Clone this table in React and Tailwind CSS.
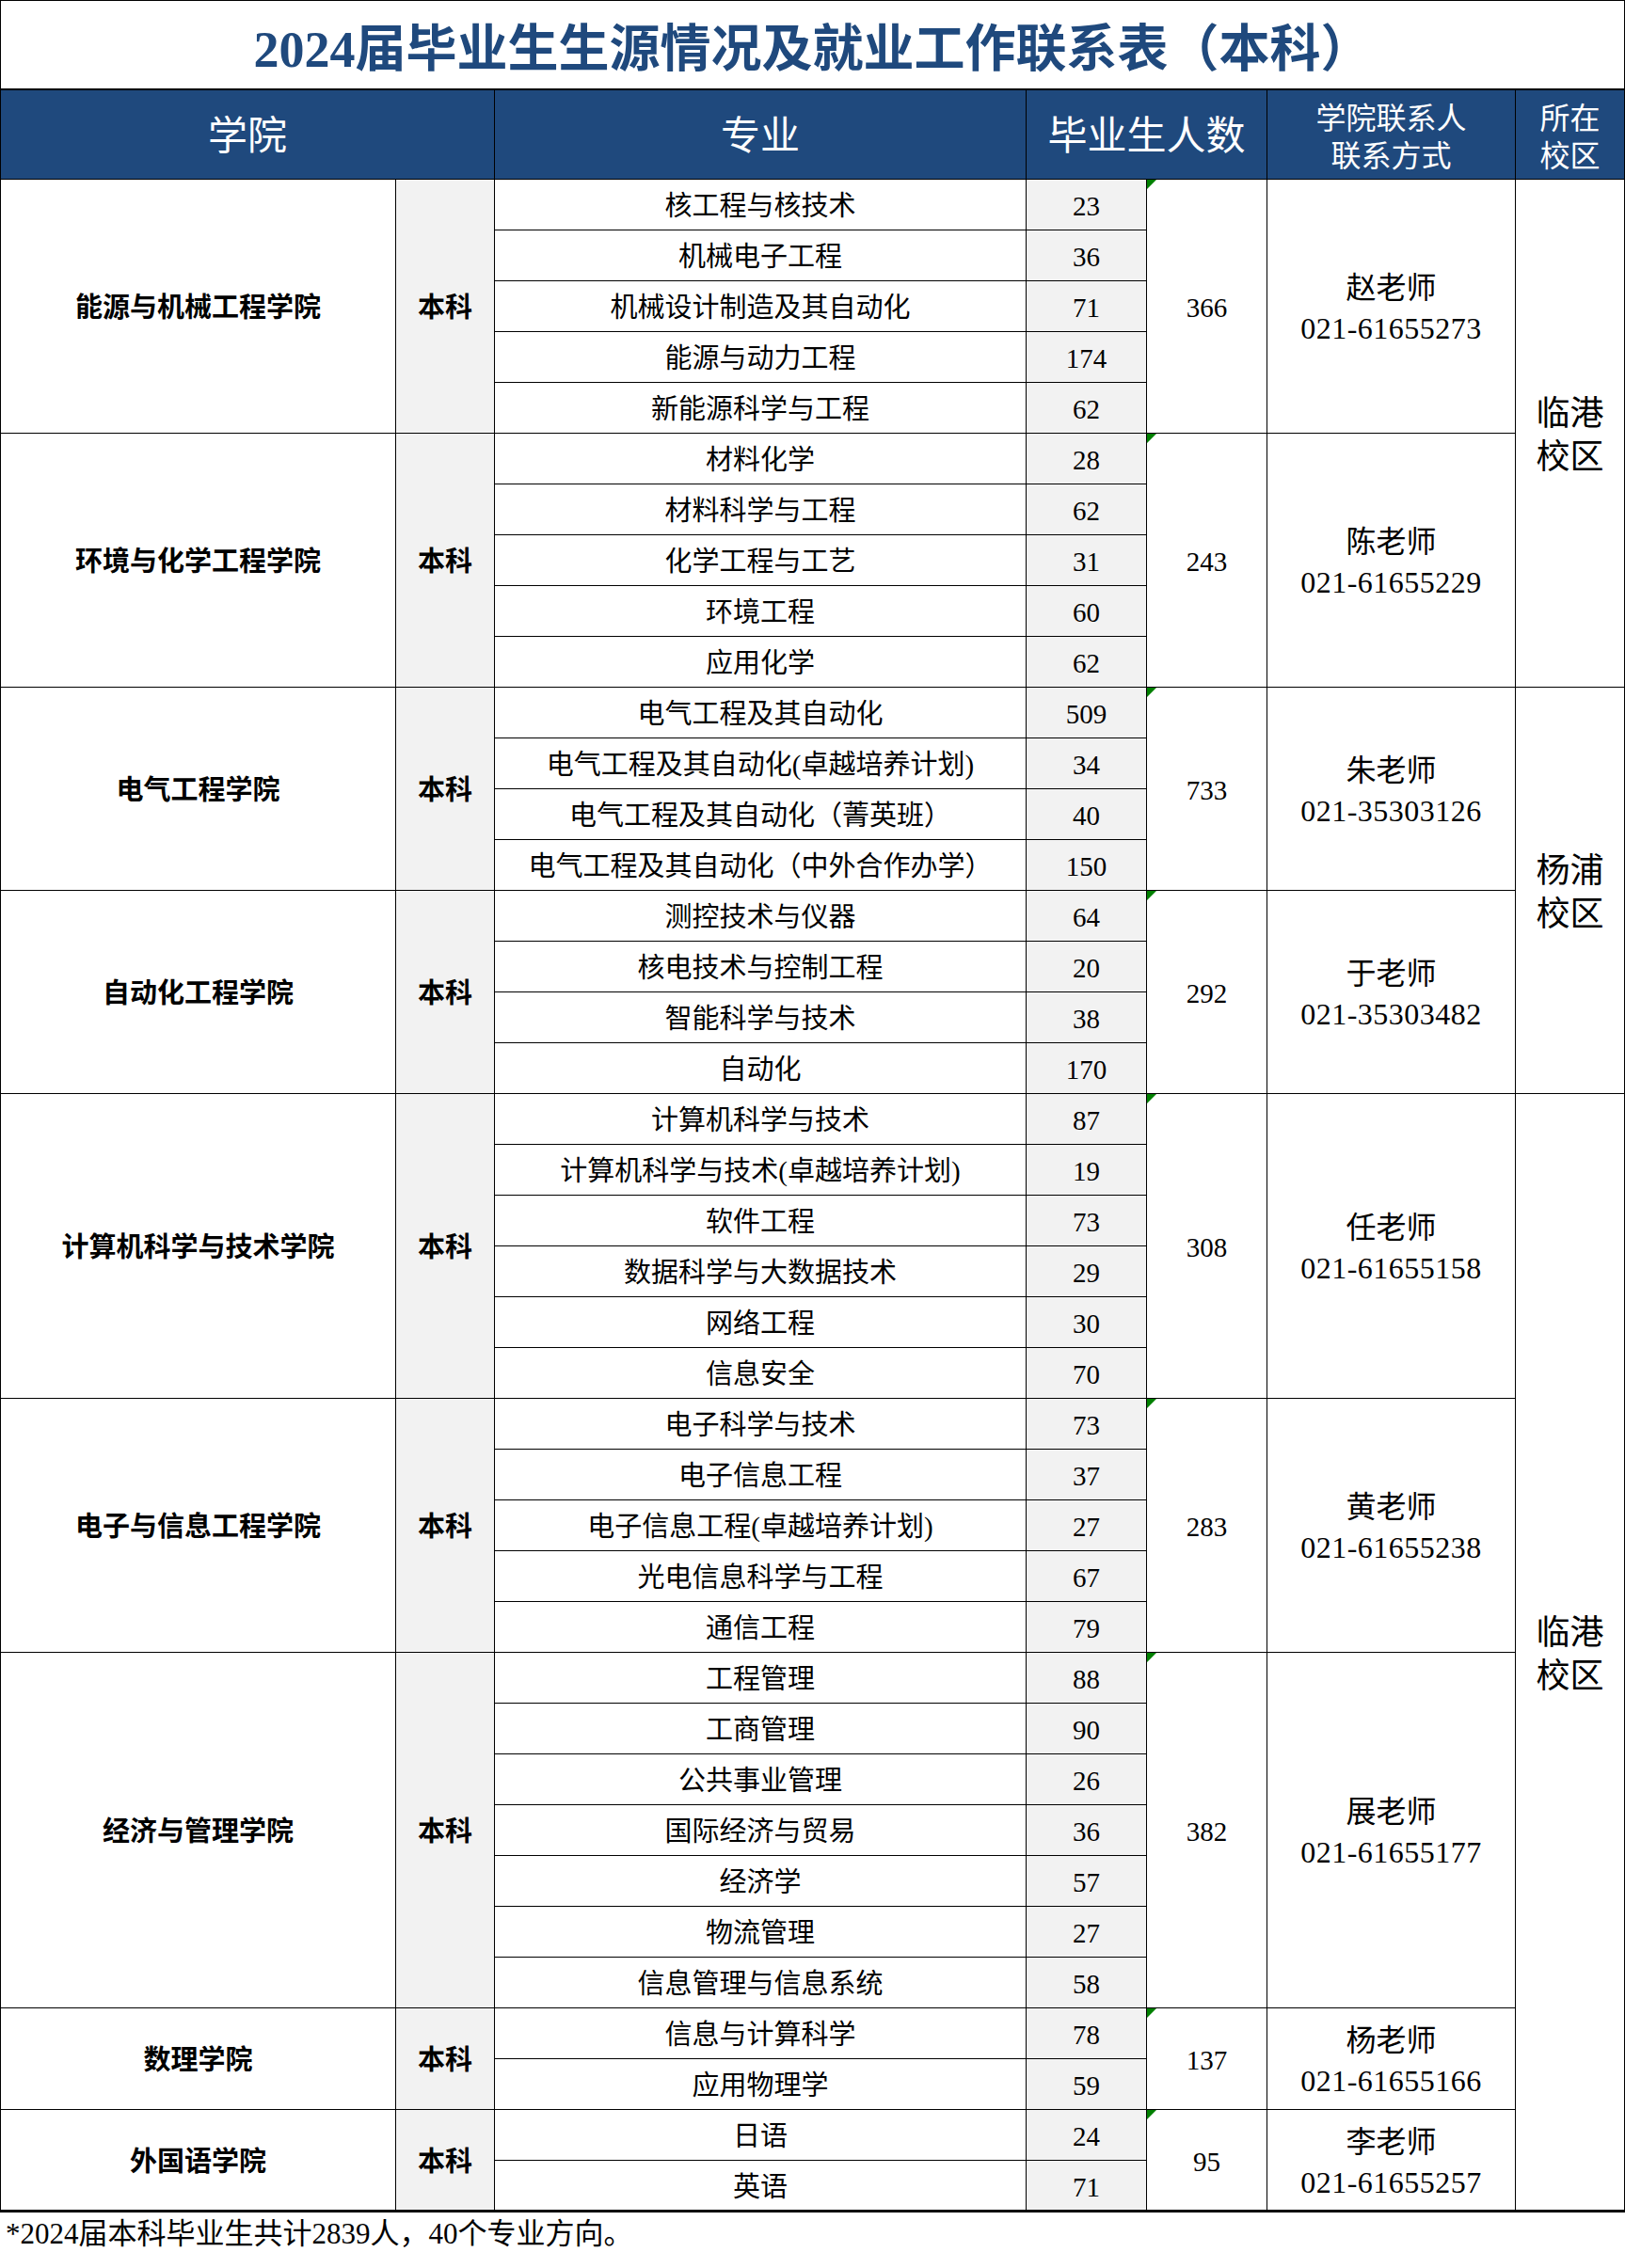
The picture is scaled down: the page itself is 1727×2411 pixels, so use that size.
const colleges = [
  {
    name: "能源与机械工程学院",
    majors: [["核工程与核技术", 23], ["机械电子工程", 36], ["机械设计制造及其自动化", 71], ["能源与动力工程", 174], ["新能源科学与工程", 62]],
    total: 366,
    teacher: "赵老师",
    phone: "021-61655273",
  },
  {
    name: "环境与化学工程学院",
    majors: [["材料化学", 28], ["材料科学与工程", 62], ["化学工程与工艺", 31], ["环境工程", 60], ["应用化学", 62]],
    total: 243,
    teacher: "陈老师",
    phone: "021-61655229",
  },
  {
    name: "电气工程学院",
    majors: [["电气工程及其自动化", 509], ["电气工程及其自动化(卓越培养计划)", 34], ["电气工程及其自动化（菁英班）", 40], ["电气工程及其自动化（中外合作办学）", 150]],
    total: 733,
    teacher: "朱老师",
    phone: "021-35303126",
  },
  {
    name: "自动化工程学院",
    majors: [["测控技术与仪器", 64], ["核电技术与控制工程", 20], ["智能科学与技术", 38], ["自动化", 170]],
    total: 292,
    teacher: "于老师",
    phone: "021-35303482",
  },
  {
    name: "计算机科学与技术学院",
    majors: [["计算机科学与技术", 87], ["计算机科学与技术(卓越培养计划)", 19], ["软件工程", 73], ["数据科学与大数据技术", 29], ["网络工程", 30], ["信息安全", 70]],
    total: 308,
    teacher: "任老师",
    phone: "021-61655158",
  },
  {
    name: "电子与信息工程学院",
    majors: [["电子科学与技术", 73], ["电子信息工程", 37], ["电子信息工程(卓越培养计划)", 27], ["光电信息科学与工程", 67], ["通信工程", 79]],
    total: 283,
    teacher: "黄老师",
    phone: "021-61655238",
  },
  {
    name: "经济与管理学院",
    majors: [["工程管理", 88], ["工商管理", 90], ["公共事业管理", 26], ["国际经济与贸易", 36], ["经济学", 57], ["物流管理", 27], ["信息管理与信息系统", 58]],
    total: 382,
    teacher: "展老师",
    phone: "021-61655177",
  },
  {
    name: "数理学院",
    majors: [["信息与计算科学", 78], ["应用物理学", 59]],
    total: 137,
    teacher: "杨老师",
    phone: "021-61655166",
  },
  {
    name: "外国语学院",
    majors: [["日语", 24], ["英语", 71]],
    total: 95,
    teacher: "李老师",
    phone: "021-61655257",
  },
];

// campus cell starts at these college indexes
const campus = {
  0: { text: ["临港", "校区"], rows: 10 },
  2: { text: ["杨浦", "校区"], rows: 8 },
  4: { text: ["临港", "校区"], rows: 22 },
};

const cell = "border border-black p-0 pt-[6px] text-center align-middle";

export default function App() {
  const rows = [];
  colleges.forEach((c, ci) => {
    c.majors.forEach(([major, count], i) => {
      rows.push(
        <tr key={ci + "-" + i} className="h-[54px]">
          {i === 0 && (
            <>
              <td rowSpan={c.majors.length} className={`${cell} text-[29px] font-bold`}>
                {c.name}
              </td>
              <td rowSpan={c.majors.length} className={`${cell} bg-[#f2f2f2] text-[29px] font-bold`}>
                本科
              </td>
            </>
          )}
          <td className={`${cell} text-[29px]`}>{major}</td>
          <td className={`${cell} bg-[#f2f2f2] text-[29px]`}>{count}</td>
          {i === 0 && (
            <>
              <td rowSpan={c.majors.length} className={`${cell} relative text-[29px]`}>
                <span className="absolute left-0 top-0 h-0 w-0 border-t-[10px] border-r-[10px] border-t-[#008000] border-r-transparent" />
                {c.total}
              </td>
              <td rowSpan={c.majors.length} className={`${cell} text-[32px] leading-[43px]`}>
                <div>{c.teacher}</div>
                <div className="tracking-[0.5px]">{c.phone}</div>
              </td>
            </>
          )}
          {i === 0 && campus[ci] && (
            <td rowSpan={campus[ci].rows} className={`${cell} text-[36px] leading-[46px]`}>
              <div>{campus[ci].text[0]}</div>
              <div>{campus[ci].text[1]}</div>
            </td>
          )}
        </tr>
      );
    });
  });

  return (
    <div className="w-[1727px] min-h-[2411px] bg-white text-black font-['Liberation_Serif','Noto_Sans_CJK_SC',serif]">
      <table className="w-[1726px] table-fixed border-collapse">
        <colgroup>
          <col className="w-[420px]" />
          <col className="w-[105px]" />
          <col className="w-[565px]" />
          <col className="w-[128px]" />
          <col className="w-[128px]" />
          <col className="w-[264px]" />
          <col className="w-[116px]" />
        </colgroup>
        <thead>
          <tr className="h-[94px]">
            <td colSpan={7} className="border border-b-2 border-black p-0 pt-[12px] text-center align-middle text-[54px] font-bold text-[#1f497d]">
              2024届毕业生生源情况及就业工作联系表（本科）
            </td>
          </tr>
          <tr className="h-[95px] bg-[#1f497d] text-white">
            <td colSpan={2} className={`${cell} text-[42px]`}>学院</td>
            <td className={`${cell} text-[42px]`}>专业</td>
            <td colSpan={2} className={`${cell} text-[42px]`}>毕业生人数</td>
            <td className={`${cell} text-[32px] leading-[40px]`}>
              <div>学院联系人</div>
              <div>联系方式</div>
            </td>
            <td className={`${cell} text-[32px] leading-[40px]`}>
              <div>所在</div>
              <div>校区</div>
            </td>
          </tr>
        </thead>
        <tbody className="border-b-[3px] border-black">{rows}</tbody>
      </table>
      <div className="pl-[6px] pt-[3px] text-[31px] leading-[40px]">
        *2024届本科毕业生共计2839人，40个专业方向。
      </div>
    </div>
  );
}
